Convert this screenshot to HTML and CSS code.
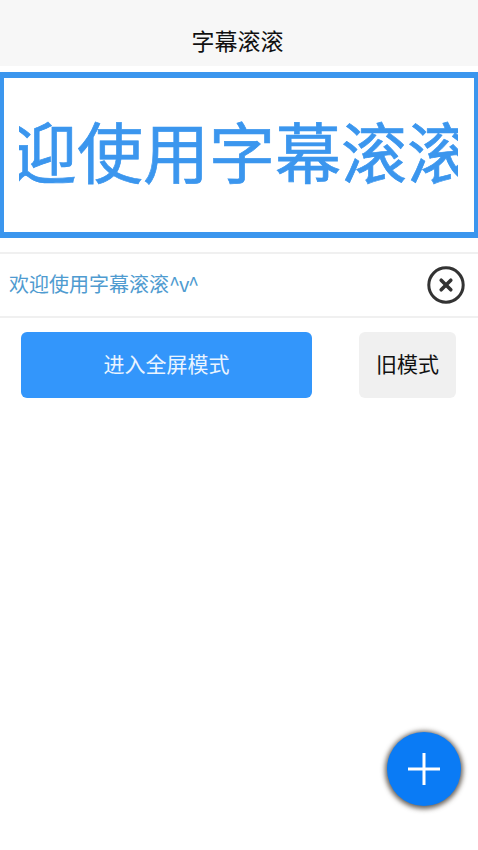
FILE: index.html
```html
<!DOCTYPE html>
<html lang="zh-CN">
<head>
    <meta charset="UTF-8">
    <meta name="viewport" content="width=device-width, initial-scale=1.0">
    <title>字幕滚滚</title>
    <link rel="stylesheet" href="styles.css">
</head>
<body>

    <div class="header">字幕滚滚</div>

    <div class="preview">
        <div class="preview-clip">
            <span class="preview-text">欢迎使用字幕滚滚^v^</span>
        </div>
    </div>

    <div class="item">
        <span class="item-text">欢迎使用字幕滚滚<span class="item-tail">^v^</span></span>
        <svg class="item-close" viewBox="0 0 38 38" width="38" height="38">
            <circle cx="19" cy="19" r="17.2" fill="none" stroke="#333" stroke-width="3"/>
            <path d="M14.2 14.2 L23.8 23.8 M23.8 14.2 L14.2 23.8" fill="none" stroke="#333" stroke-width="3.6" stroke-linecap="round"/>
        </svg>
    </div>

    <div class="actions">
        <button class="btn-full">进入全屏模式</button>
        <button class="btn-old">旧模式</button>
    </div>

    <button class="fab">
        <svg viewBox="0 0 34 34" width="34" height="34">
            <path d="M17 1 V33 M1 17 H33" fill="none" stroke="#fff" stroke-width="3"/>
        </svg>
    </button>

</body>
</html>
```

FILE: styles.css
```css
body {
    background-color: #fff;
    font-family: "Noto Sans CJK SC", "Liberation Sans", sans-serif;
    color: #000;
    margin: 0;
    padding: 0;
    height: 850px;
    overflow: hidden;
}

.header {
    height: 66px;
    line-height: 80px;
    padding-right: 3px;
    background-color: #f7f7f7;
    text-align: center;
    font-size: 23px;
    color: #111;
    overflow: hidden;
    margin-bottom: 6px;
}

.preview {
    height: 166px;
    box-sizing: border-box;
    border: solid #3b96ee;
    border-width: 6px 4px;
    padding: 0 16px 12px 15px;
    margin-bottom: 14px;
}

.preview-clip {
    height: 100%;
    overflow: hidden;
    white-space: nowrap;
    display: flex;
    align-items: center;
}

.preview-text {
    font-size: 66px;
    line-height: 1;
    color: #3b96ee;
    -webkit-text-stroke: 0.7px #3b96ee;
    margin-left: -74px;
}

.item {
    height: 66px;
    box-sizing: border-box;
    border-top: 2px solid #f0f0f0;
    border-bottom: 2px solid #f0f0f0;
    padding: 0 13px 0 9px;
    display: flex;
    justify-content: space-between;
    align-items: center;
    margin-bottom: 14px;
}

.item-text {
    font-size: 20px;
    line-height: 1;
    padding-bottom: 3px;
    color: #4f9bd0;
}

.item-tail {
    letter-spacing: -1.2px;
}

.actions {
    display: flex;
    justify-content: space-between;
    padding: 0 22px 0 21px;
}

.actions button {
    height: 66px;
    border: none;
    border-radius: 6px;
    font-family: inherit;
    font-size: 21px;
    line-height: 1;
    padding: 0 0 3px;
}

.btn-full {
    width: 291px;
    background-color: #3396fb;
    color: #eaf4ff;
}

.btn-old {
    width: 97px;
    background-color: #f0f0f0;
    color: #111;
}

.fab {
    position: absolute;
    left: 387px;
    top: 732px;
    width: 74px;
    height: 74px;
    border: none;
    border-radius: 50%;
    padding: 0;
    background-color: #0a7bf5;
    box-shadow: 0 1px 5px 2px rgba(40, 30, 20, 0.7);
    display: flex;
    justify-content: center;
    align-items: center;
}
```
